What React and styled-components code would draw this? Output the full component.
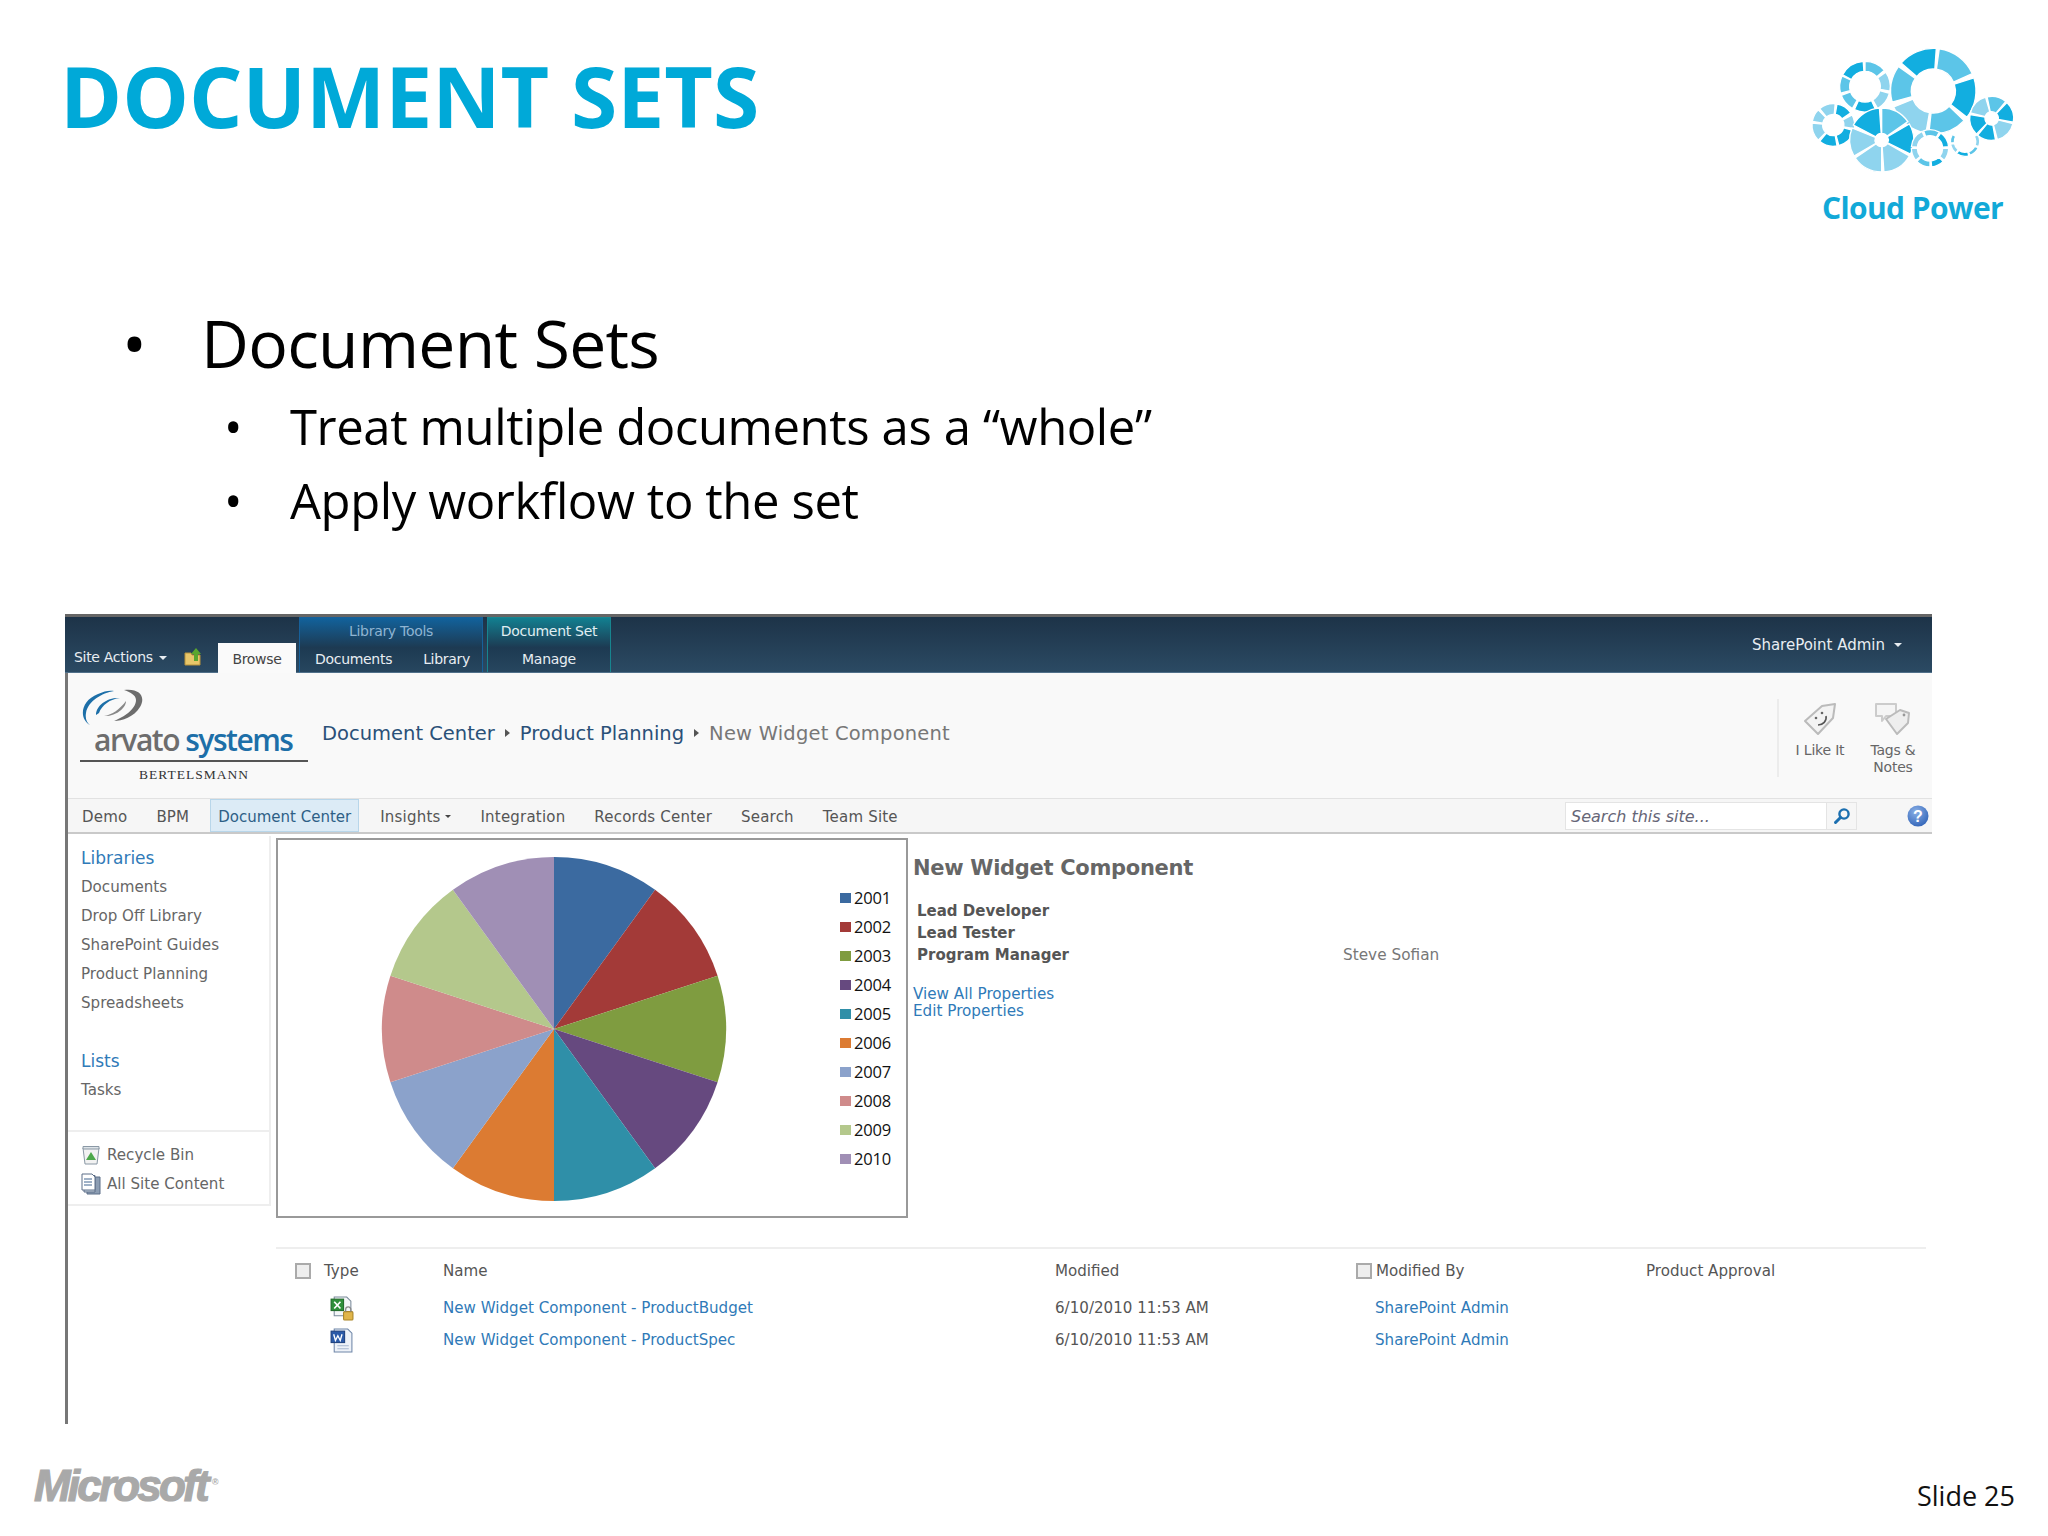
import React from 'react';
import styled, { createGlobalStyle } from 'styled-components';

const Global = createGlobalStyle`
    html, body { margin: 0; padding: 0; background: #fff; }
    * { box-sizing: border-box; }
`
const Slide = styled.div`
    width: 2048px;
    height: 1536px;
    display: flex;
    flex-direction: column;
    background: #fff;
    overflow: hidden;
    font-family: "Open Sans", sans-serif;
`
const Head = styled.div`
    height: 299px;
    display: flex;
    justify-content: space-between;
    align-items: flex-start;
`
const Title = styled.h1`
    margin: 0;
    padding: 46px 0 0 60px;
    font-size: 84px;
    line-height: 100px;
    font-weight: 700;
    color: #00a9d8;
`
const LogoBox = styled.div`
    width: 268px;
    padding-top: 30px;
    text-align: center;
`
const LogoText = styled.div`
    margin-top: 8px;
    margin-left: -3px;
    font-size: 30px;
    line-height: 40px;
    font-weight: 700;
    letter-spacing: -0.6px;
    color: #12a9d8;
`
const Bullet = styled.div`
    display: flex;
    color: #000;
    padding-left: ${p => (p.$sub ? 224 : 122)}px;
    font-size: ${p => (p.$sub ? 49 : 66)}px;
    letter-spacing: ${p => (p.$sub ? -0.4 : -0.7)}px;
    line-height: ${p => (p.$sub ? 74 : 86)}px;
    margin-bottom: ${p => (p.$gap ? 4 : 0)}px;
    &::before {
        content: "•";
        width: ${p => (p.$sub ? 66 : 79)}px;
    }
`
const Panel = styled.div`
    margin: 77px 116px 0 65px;
    height: 810px;
    border-left: 3px solid #777;
    font-family: "DejaVu Sans", sans-serif;
    color: #555;
`
const TopBar = styled.div`
    height: 59px;
    display: flex;
    align-items: flex-end;
    border-top: 3px solid #666;
    border-bottom: 1px solid #50708a;
    margin-left: -3px;
    padding-left: 9px;
    background: linear-gradient(#1d3348, #2b4a63);
    color: #e8edf2;
    font-size: 14px;
`
const SiteActions = styled.div`
    height: 30px;
    display: flex;
    align-items: center;
    gap: 16px;
    width: 144px;
    letter-spacing: -0.3px;
`
const Caret = styled.span`
    display: inline-block;
    vertical-align: middle;
    border: ${p => p.$size || 4}px solid transparent;
    border-top-color: ${p => p.$color || 'currentColor'};
    border-bottom-width: 0;
    margin-left: ${p => p.$ml || 0}px;
`
const BrowseTab = styled.div`
    width: 78px;
    height: 30px;
    background: #fafafa;
    color: #444;
    text-align: center;
    line-height: 32px;
    letter-spacing: -0.3px;
    margin-bottom: -1px;
`
const TabGroup = styled.div`
    margin-left: ${p => p.$ml}px;
    width: ${p => p.$w}px;
    height: 55px;
    border: 1px solid ${p => p.$edge};
    border-bottom: 0;
    background: linear-gradient(${p => p.$tint}, #1d3a52 55%, #27465f);
    letter-spacing: -0.3px;
`
const TabLabel = styled.div`
    height: 26px;
    line-height: 26px;
    text-align: center;
    color: ${p => p.$color};
`
const TabRow = styled.div`
    height: 30px;
    display: flex;
    justify-content: ${p => (p.$center ? 'center' : 'flex-start')};
    gap: 31px;
    align-items: center;
    padding-left: ${p => (p.$center ? 0 : 15)}px;
`
const UserMenu = styled.div`
    margin-left: auto;
    align-self: center;
    padding-right: 30px;
    display: flex;
    align-items: center;
    font-size: 15px;
`
const TitleRow = styled.div`
    height: 126px;
    display: flex;
    background: #f9f9f9;
    border-bottom: 1px solid #e2e2e2;
`
const Brand = styled.div`
    width: 255px;
    padding: 16px 0 0 12px;
    display: flex;
    flex-direction: column;
`
const BrandName = styled.div`
    width: 228px;
    font-family: "Open Sans", sans-serif;
    font-weight: 600;
    font-size: 30px;
    line-height: 34px;
    letter-spacing: -1.5px;
    margin-top: -4px;
    padding-left: 14px;
    color: #6d6d6d;
    border-bottom: 2px solid #555;
    padding-bottom: 3px;
    white-space: nowrap;
    & > span { color: #1d6fa8; }
`
const BrandSub = styled.div`
    width: 228px;
    font-family: "Liberation Serif", serif;
    font-size: 13.5px;
    line-height: 26px;
    letter-spacing: 1px;
    text-align: center;
    color: #333;
`
const Crumbs = styled.div`
    display: flex;
    align-items: center;
    height: 120px;
    font-size: 19.5px;
    color: #2a5078;
    gap: 10px;
    margin-left: -1px;
`
const CrumbSep = styled.span`
    border: 4px solid transparent;
    border-left: 5px solid #555;
    border-right-width: 0;
`
const CrumbLast = styled.span`
    color: #777;
    letter-spacing: 0.2px;
`
const Social = styled.div`
    margin-left: auto;
    margin-right: 13px;
    margin-top: 26px;
    height: 78px;
    border-left: 2px solid #ececec;
    padding-left: 15px;
    display: flex;
    gap: 21px;
`
const SocialItem = styled.div`
    width: ${p => p.$w}px;
    display: flex;
    flex-direction: column;
    align-items: center;
    text-align: center;
    font-size: 14px;
    line-height: 17px;
    color: #666;
    letter-spacing: -0.2px;
    & > svg { margin-bottom: 5px; margin-top: 2px; flex-shrink: 0; }
`
const NavRow = styled.div`
    height: 35px;
    display: flex;
    align-items: stretch;
    gap: 13px;
    padding: 0 0 0 6px;
    background: #f6f6f6;
    border-bottom: 2px solid #c9c9c9;
    font-size: 15px;
`
const NavItem = styled.div`
    display: flex;
    align-items: center;
    padding: 2px 8px 0;
    letter-spacing: ${p => (p.$on ? 0 : 0.2)}px;
    color: ${p => (p.$on ? '#2e5f86' : '#555')};
    background: ${p => (p.$on ? '#dcebf6' : 'transparent')};
    box-shadow: ${p => (p.$on ? 'inset 0 0 0 1px #b8d6ea' : 'none')};
`
const SearchWrap = styled.div`
    margin-left: auto;
    display: flex;
    align-items: center;
    padding-right: 3px;
`
const SearchBox = styled.div`
    width: 262px;
    height: 28px;
    background: #fff;
    border: 1px solid #e4e4e4;
    padding-left: 5px;
    font-style: italic;
    font-size: 16px;
    line-height: 27px;
    color: #667;
`
const SearchBtn = styled.div`
    width: 30px;
    height: 28px;
    border: 1px solid #e4e4e4;
    border-left: 0;
    display: flex;
    align-items: center;
    justify-content: center;
    margin-right: 50px;
`
const Main = styled.div`
    display: grid;
    grid-template-columns: 203px 1fr;
`
const SideNav = styled.div`
    height: 370px;
    margin-top: 2px;
    border-right: 2px solid #eee;
    border-bottom: 2px solid #eee;
    display: flex;
    flex-direction: column;
`
const SideHead = styled.div`
    padding-left: 13px;
    font-size: 17px;
    line-height: 29px;
    color: #2f7ab8;
    margin-top: ${p => p.$mt}px;
`
const SideLink = styled.div`
    padding-left: 13px;
    font-size: 15.1px;
    line-height: 29px;
    color: #666;
`
const SideFoot = styled.div`
    margin-top: auto;
    border-top: 2px solid #eee;
    padding: 8px 0 6px 13px;
`
const SideTool = styled.div`
    display: flex;
    align-items: center;
    gap: 6px;
    height: 29px;
    font-size: 15.1px;
    color: #666;
`
const Content = styled.div`
    padding: 4px 6px 0 5px;
`
const Top = styled.div`
    display: flex;
`
const ChartBox = styled.div`
    width: 632px;
    height: 380px;
    border: 2px solid #999;
    display: flex;
`
const Legend = styled.div`
    margin-left: 10px;
    padding-top: 43px;
    display: flex;
    flex-direction: column;
    font-family: "Open Sans", sans-serif;
    color: #111;
`
const LegendItem = styled.div`
    height: 29px;
    display: flex;
    align-items: center;
    gap: 3px;
    font-size: 16.5px;
    letter-spacing: -0.2px;
`
const Swatch = styled.span`
    width: 11px;
    height: 10px;
    background: ${p => p.$c};
`
const Details = styled.div`
    flex: 1;
    padding: 16px 0 0 5px;
`
const DetailTitle = styled.div`
    font-size: 21px;
    line-height: 28px;
    font-weight: 700;
    color: #666;
    letter-spacing: -0.3px;
`
const People = styled.div`
    margin-top: 18px;
    padding-left: 4px;
    margin-bottom: 20px;
`
const Person = styled.div`
    display: grid;
    grid-template-columns: 426px 1fr;
    font-size: 15px;
    line-height: 22px;
    font-weight: 700;
    color: #555;
    & > span { font-weight: 400; font-size: 15.3px; color: #777; }
`
const PropLink = styled.div`
    font-size: 15.2px;
    line-height: 17px;
    color: #2f7ab8;
`
const Table = styled.div`
    margin-top: 29px;
    border-top: 2px solid #eee;
    font-size: 15.1px;
`
const TRow = styled.div`
    display: grid;
    grid-template-columns: 161px 612px 301px 290px 1fr;
    align-items: center;
    height: ${p => p.$h}px;
    margin-top: ${p => p.$mt || 0}px;
    padding-left: 6px;
    color: #555;
`
const TCell = styled.div`
    display: flex;
    align-items: center;
    gap: ${p => p.$gap || 0}px;
    padding-left: ${p => p.$pl || 0}px;
    color: ${p => (p.$link ? '#2f7ab8' : 'inherit')};
`
const Check = styled.span`
    width: 16px;
    height: 16px;
    border: 2px solid #aaa;
    background: #eee;
`
const Footer = styled.div`
    flex: 1;
    display: flex;
    justify-content: space-between;
    padding: 41px 33px 0 34px;
`
const MsLogo = styled.div`
    font-family: "Liberation Sans", sans-serif;
    font-style: italic;
    font-weight: 700;
    font-size: 44px;
    line-height: 42px;
    letter-spacing: -2.8px;
    color: #a9a9a9;
    -webkit-text-stroke: 1.2px #a9a9a9;
    & > sup { font-size: 9px; letter-spacing: 0; -webkit-text-stroke: 0; vertical-align: 16px; line-height: 0; margin-left: 5px; }
`
const SlideNum = styled.div`
    font-size: 27px;
    line-height: 38px;
    padding-top: 12px;
    color: #111;
`

const DARK = '#12aee0';
const MID = '#5cc5e8';
const LIGHT = '#8fd4ee';

const arc = (cx, cy, R, r, a0, a1) => {
    const p = (rad, a) => {
        const t = (a - 90) * Math.PI / 180;
        return `${(cx + rad * Math.cos(t)).toFixed(1)} ${(cy + rad * Math.sin(t)).toFixed(1)}`;
    };
    const big = a1 - a0 > 180 ? 1 : 0;
    return `M${p(R, a0)} A${R} ${R} 0 ${big} 1 ${p(R, a1)} L${p(r, a1)} A${r} ${r} 0 ${big} 0 ${p(r, a0)} Z`;
};

// cx, cy, outer, inner, then [from, to, colour] for each piece
const rings = [
    [460, 183, 128, 66, [[-49, 4, DARK], [8, 66, MID], [72, 128, DARK], [134, 186, MID], [190, 248, LIGHT], [255, 305, MID]]],
    [255, 170, 76, 46, [[-62, -4, DARK], [0, 50, MID], [55, 100, LIGHT], [105, 150, LIGHT], [155, 205, DARK], [210, 250, MID], [255, 295, MID]]],
    [160, 285, 64, 32, [[-40, 5, LIGHT], [10, 55, DARK], [62, 100, LIGHT], [105, 165, DARK], [170, 220, DARK], [225, 275, LIGHT], [280, 315, LIGHT]]],
    [305, 330, 96, 20, [[-62, -4, DARK], [0, 55, MID], [60, 116, DARK], [120, 176, LIGHT], [180, 236, LIGHT], [240, 292, LIGHT]]],
    [450, 355, 56, 38, [[-20, 30, MID], [35, 85, DARK], [90, 130, LIGHT], [135, 175, DARK], [180, 225, MID], [230, 270, LIGHT], [275, 335, LIGHT]]],
    [555, 335, 44, 32, [[60, 110, LIGHT], [115, 160, MID], [165, 215, DARK], [220, 260, LIGHT], [265, 300, MID]]],
    [635, 265, 66, 20, [[-12, 40, MID], [44, 100, DARK], [104, 165, LIGHT], [170, 220, DARK], [224, 280, DARK], [284, 344, LIGHT]]],
];

const CloudLogo = () => (
    <svg width="268" height="150" viewBox="0 0 804 450" style={{ display: 'block' }}>
        {rings.map(([cx, cy, R, r, parts]) =>
            parts.map(([a0, a1, c]) => (
                <path key={`${cx}-${a0}`} d={arc(cx, cy, R, r, a0, a1)} fill={c} stroke="#fff" strokeWidth="4" />
            ))
        )}
    </svg>
);

const ArvatoMark = () => (
    <svg width="66" height="38" viewBox="0 0 66 38" style={{ display: 'block' }}>
        <path d="M10 36 C-1 30 0 12 18 5 C24 2 30 1 34 2 C22 4 8 12 6 24 C5 30 7 34 10 36 Z" fill="#1d6fa8" />
        <path d="M44 1 C60 -1 66 8 60 18 C54 28 42 32 34 32 C44 28 56 20 56 11 C56 6 50 3 44 1 Z" fill="#6d6d6d" />
        <path d="M16 26 C16 16 28 8 40 9 C30 10 22 16 19 24 Z" fill="#1d6fa8" />
        <path d="M46 12 C46 20 34 28 24 27 C32 26 40 20 46 12 Z" fill="#888" />
    </svg>
);

const FolderUp = () => (
    <svg width="22" height="20" viewBox="0 0 20 20">
        <path d="M1 6h6l1 2h8v10H1z" fill="#e8c66a" stroke="#b8923a" />
        <path d="M12 1l5 6h-3v7h-4V7H7z" fill="#5aa62e" />
    </svg>
);

const TagSmile = () => (
    <svg width="36" height="36" viewBox="0 0 36 36">
        <path d="M3 20 L20 5 L33 3 L31 17 L16 33 Z" fill="#f3f3f3" stroke="#bbb" strokeWidth="2" strokeLinejoin="round" />
        <circle cx="14" cy="17" r="1.3" fill="#666" />
        <circle cx="20" cy="12" r="1.3" fill="#666" />
        <path d="M16 24 C21 24 25 20 24 15" fill="none" stroke="#555" strokeWidth="1.6" />
    </svg>
);

const TagNote = () => (
    <svg width="38" height="36" viewBox="0 0 38 36">
        <path d="M2 3 H22 V15 H12 L8 20 V15 H2 Z" fill="#f5f5f5" stroke="#ccc" strokeWidth="2" strokeLinejoin="round" />
        <path d="M12 18 L26 9 L35 12 L34 22 L23 33 Z" fill="#eee" stroke="#bbb" strokeWidth="2" strokeLinejoin="round" />
        <circle cx="30" cy="14" r="1.4" fill="#999" />
    </svg>
);

const SearchIcon = () => (
    <svg width="18" height="18" viewBox="0 0 18 18">
        <circle cx="11" cy="7" r="4.6" fill="none" stroke="#1b6fb0" strokeWidth="2.4" />
        <path d="M7.5 10.5 L2.5 15.5" stroke="#1b6fb0" strokeWidth="3" strokeLinecap="round" />
    </svg>
);

const HelpIcon = () => (
    <svg width="22" height="22" viewBox="0 0 22 22" style={{ display: 'block' }}>
        <defs>
            <radialGradient id="help" cx="40%" cy="30%" r="80%">
                <stop offset="0" stopColor="#8ab0e6" />
                <stop offset="1" stopColor="#2c5fb5" />
            </radialGradient>
        </defs>
        <circle cx="11" cy="11" r="10.5" fill="url(#help)" />
        <text x="11" y="17" textAnchor="middle" fontSize="16" fontWeight="700" fill="#fff" fontFamily="Liberation Sans, sans-serif">?</text>
    </svg>
);

const BinIcon = () => (
    <svg width="20" height="22" viewBox="0 0 20 22">
        <path d="M2 4 H18 L16 20 H4 Z" fill="#f2f2f2" stroke="#8a98a5" />
        <path d="M2 2.5 H18 V5 H2 Z" fill="#dde3e8" stroke="#8a98a5" />
        <path d="M10 8 L15 16 H5 Z" fill="#4da84a" />
    </svg>
);

const PagesIcon = () => (
    <svg width="20" height="22" viewBox="0 0 20 22">
        <path d="M6 4 H19 V21 H6 Z" fill="#8c9db3" stroke="#5d6f88" />
        <path d="M3 2.5 H14 V19 H3 Z" fill="#c9d4e0" stroke="#5d6f88" />
        <path d="M1 1 H11 L14 4 V17 H1 Z" fill="#fff" stroke="#5d6f88" />
        <path d="M3 6 H11 M3 9 H11 M3 12 H11" stroke="#41648f" />
    </svg>
);

const ExcelIcon = () => (
    <svg width="25" height="25" viewBox="0 0 24 24">
        <path d="M5 1 H17 L21 5 V19 H5 Z" fill="#f4f6f8" stroke="#7a8a9a" />
        <rect x="2" y="3" width="12" height="11" fill="#2f8f3a" stroke="#1f6a28" />
        <path d="M5 5.5 L11 12 M11 5.5 L5 12" stroke="#fff" strokeWidth="1.6" />
        <rect x="14" y="15" width="9" height="8" rx="1" fill="#e0b54a" stroke="#a98425" />
        <path d="M16 15 V13 a2.5 2.5 0 0 1 5 0 V15" fill="none" stroke="#888" strokeWidth="1.2" />
    </svg>
);

const WordIcon = () => (
    <svg width="25" height="25" viewBox="0 0 24 24">
        <path d="M5 1 H18 L22 5 V23 H5 Z" fill="#eef2f8" stroke="#6f86a8" />
        <path d="M8 17 H19 M8 20 H19" stroke="#a8b8d0" />
        <rect x="2" y="3" width="13" height="11" fill="#2b5aa8" stroke="#1d3f7c" />
        <path d="M4.5 6 L6.2 12 L8.5 7.5 L10.8 12 L12.5 6" fill="none" stroke="#fff" strokeWidth="1.3" />
    </svg>
);

const slices = [
    { year: '2001', color: '#3b6aa0' },
    { year: '2002', color: '#a33a38' },
    { year: '2003', color: '#7f9c40' },
    { year: '2004', color: '#66497f' },
    { year: '2005', color: '#2f8fa8' },
    { year: '2006', color: '#dc7b32' },
    { year: '2007', color: '#8ba2cb' },
    { year: '2008', color: '#cf8b8b' },
    { year: '2009', color: '#b4c88c' },
    { year: '2010', color: '#a08fb5' },
];

const Pie = () => {
    const cx = 276;
    const cy = 189;
    const r = 172;
    const at = a => {
        const t = (a - 90) * Math.PI / 180;
        return `${cx + r * Math.cos(t)} ${cy + r * Math.sin(t)}`;
    };
    return (
        <svg width="552" height="375" viewBox="0 0 552 375" style={{ display: 'block', flexShrink: 0 }}>
            {slices.map((s, i) => (
                <path key={s.year} d={`M${cx} ${cy} L${at(i * 36)} A${r} ${r} 0 0 1 ${at((i + 1) * 36)} Z`} fill={s.color} />
            ))}
        </svg>
    );
};

const App = () => (
    <Slide>
        <Global />
        <Head>
            <Title>DOCUMENT SETS</Title>
            <LogoBox>
                <CloudLogo />
                <LogoText>Cloud Power</LogoText>
            </LogoBox>
        </Head>
        <Bullet $gap>Document Sets</Bullet>
        <Bullet $sub>Treat multiple documents as a “whole”</Bullet>
        <Bullet $sub>Apply workflow to the set</Bullet>

        <Panel>
            <TopBar>
                <SiteActions>
                    <span>Site Actions<Caret $ml={6} /></span>
                    <FolderUp />
                </SiteActions>
                <BrowseTab>Browse</BrowseTab>
                <TabGroup $ml={3} $w={184} $edge="#17609a" $tint="#12629c">
                    <TabLabel $color="#8fb4d2">Library Tools</TabLabel>
                    <TabRow><span>Documents</span><span>Library</span></TabRow>
                </TabGroup>
                <TabGroup $ml={4} $w={124} $edge="#17858f" $tint="#127f90">
                    <TabLabel $color="#e0eef2">Document Set</TabLabel>
                    <TabRow $center><span>Manage</span></TabRow>
                </TabGroup>
                <UserMenu>SharePoint Admin<Caret $ml={9} /></UserMenu>
            </TopBar>

            <TitleRow>
                <Brand>
                    <ArvatoMark />
                    <BrandName>arvato <span>systems</span></BrandName>
                    <BrandSub>BERTELSMANN</BrandSub>
                </Brand>
                <Crumbs>
                    <span>Document Center</span>
                    <CrumbSep />
                    <span>Product Planning</span>
                    <CrumbSep />
                    <CrumbLast>New Widget Component</CrumbLast>
                </Crumbs>
                <Social>
                    <SocialItem $w={52}><TagSmile />I Like It</SocialItem>
                    <SocialItem $w={52}><TagNote />Tags &amp; Notes</SocialItem>
                </Social>
            </TitleRow>

            <NavRow>
                <NavItem>Demo</NavItem>
                <NavItem>BPM</NavItem>
                <NavItem $on>Document Center</NavItem>
                <NavItem>Insights<Caret $size={3} $color="#444" $ml={5} /></NavItem>
                <NavItem>Integration</NavItem>
                <NavItem>Records Center</NavItem>
                <NavItem>Search</NavItem>
                <NavItem>Team Site</NavItem>
                <SearchWrap>
                    <SearchBox>Search this site...</SearchBox>
                    <SearchBtn><SearchIcon /></SearchBtn>
                    <HelpIcon />
                </SearchWrap>
            </NavRow>

            <Main>
                <SideNav>
                    <SideHead $mt={8}>Libraries</SideHead>
                    <SideLink>Documents</SideLink>
                    <SideLink>Drop Off Library</SideLink>
                    <SideLink>SharePoint Guides</SideLink>
                    <SideLink>Product Planning</SideLink>
                    <SideLink>Spreadsheets</SideLink>
                    <SideHead $mt={29}>Lists</SideHead>
                    <SideLink>Tasks</SideLink>
                    <SideFoot>
                        <SideTool><BinIcon />Recycle Bin</SideTool>
                        <SideTool><PagesIcon />All Site Content</SideTool>
                    </SideFoot>
                </SideNav>
                <Content>
                    <Top>
                        <ChartBox>
                            <Pie />
                            <Legend>
                                {slices.map(s => (
                                    <LegendItem key={s.year}><Swatch $c={s.color} />{s.year}</LegendItem>
                                ))}
                            </Legend>
                        </ChartBox>
                        <Details>
                            <DetailTitle>New Widget Component</DetailTitle>
                            <People>
                                <Person>Lead Developer</Person>
                                <Person>Lead Tester</Person>
                                <Person>Program Manager<span>Steve Sofian</span></Person>
                            </People>
                            <PropLink>View All Properties</PropLink>
                            <PropLink>Edit Properties</PropLink>
                        </Details>
                    </Top>
                    <Table>
                        <TRow $h={44}>
                            <TCell $pl={13} $gap={13}><Check />Type</TCell>
                            <TCell>Name</TCell>
                            <TCell>Modified</TCell>
                            <TCell $gap={4}><Check />Modified By</TCell>
                            <TCell>Product Approval</TCell>
                        </TRow>
                        <TRow $h={32} $mt={-1}>
                            <TCell $pl={47}><ExcelIcon /></TCell>
                            <TCell $link>New Widget Component - ProductBudget</TCell>
                            <TCell>6/10/2010 11:53 AM</TCell>
                            <TCell $pl={19} $link>SharePoint Admin</TCell>
                            <TCell />
                        </TRow>
                        <TRow $h={32}>
                            <TCell $pl={47}><WordIcon /></TCell>
                            <TCell $link>New Widget Component - ProductSpec</TCell>
                            <TCell>6/10/2010 11:53 AM</TCell>
                            <TCell $pl={19} $link>SharePoint Admin</TCell>
                            <TCell />
                        </TRow>
                    </Table>
                </Content>
            </Main>
        </Panel>

        <Footer>
            <MsLogo>Microsoft<sup>®</sup></MsLogo>
            <SlideNum>Slide 25</SlideNum>
        </Footer>
    </Slide>
);

export default App;
